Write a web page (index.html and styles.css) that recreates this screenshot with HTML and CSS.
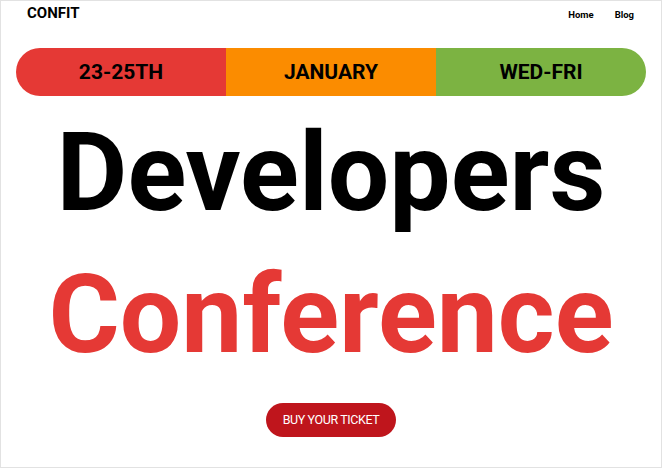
FILE: index.html
```html
<!DOCTYPE html>
<html lang="en">
<head>
<meta charset="utf-8">
<title>Confit</title>
<link rel="stylesheet" href="styles.css">
</head>
<body>
<div class="page">
  <header class="header">
    <div class="logo">CONFIT</div>
    <nav class="nav">
      <a href="#" class="nav-link">Home</a>
      <a href="#" class="nav-link">Blog</a>
    </nav>
  </header>
  <div class="pill">
    <div class="seg seg-red">23-25TH</div>
    <div class="seg seg-orange">JANUARY</div>
    <div class="seg seg-green">WED-FRI</div>
  </div>
  <h1 class="title">
    <span class="line line-dark">Developers</span>
    <span class="line line-red">Conference</span>
  </h1>
  <div class="cta-wrap">
    <a href="#" class="cta">BUY YOUR TICKET</a>
  </div>
</div>
</body>
</html>
```
FILE: styles.css
```css
* { box-sizing: border-box; }
html, body { margin: 0; padding: 0; background: #fff; }
body { font-family: Roboto, "Liberation Sans", sans-serif; color: #000; }
.page {
  width: 662px;
  height: 468px;
  border: 1px solid #e2e2e2;
  display: flex;
  flex-direction: column;
  overflow: hidden;
}
.header {
  display: flex;
  justify-content: space-between;
  align-items: flex-start;
  padding: 3px 27px 0 26px;
}
.logo {
  font-size: 15px;
  line-height: 18px;
  font-weight: 700;
}
.nav {
  display: flex;
  gap: 21px;
  margin-top: 4px;
}
.nav-link {
  font-size: 9.5px;
  line-height: 14px;
  font-weight: 700;
  color: #000;
  text-decoration: none;
}
.pill {
  display: flex;
  margin: 26px 15px 0 15px;
  height: 48px;
  border-radius: 24px;
  overflow: hidden;
}
.seg {
  flex: 1;
  display: flex;
  align-items: center;
  justify-content: center;
  font-size: 21px;
  font-weight: 700;
  color: #000;
}
.seg-red { background: #e53935; }
.seg-orange { background: #fb8c00; }
.seg-green { background: #7cb342; }
.title {
  margin: 23px 0 0 0;
  display: flex;
  flex-direction: column;
  align-items: center;
  gap: 34px;
  font-weight: 700;
  font-size: 109px;
  line-height: 108px;
}
.line { display: block; }
.line-dark { color: #000; }
.line-red { color: #e53935; }
.cta-wrap {
  display: flex;
  justify-content: center;
  margin-top: 34px;
}
.cta {
  display: block;
  height: 34px;
  line-height: 34px;
  padding: 0 17px;
  border-radius: 17px;
  background: #bf151c;
  color: #fff;
  font-size: 12.5px;
  letter-spacing: -0.4px;
  text-decoration: none;
}
```
